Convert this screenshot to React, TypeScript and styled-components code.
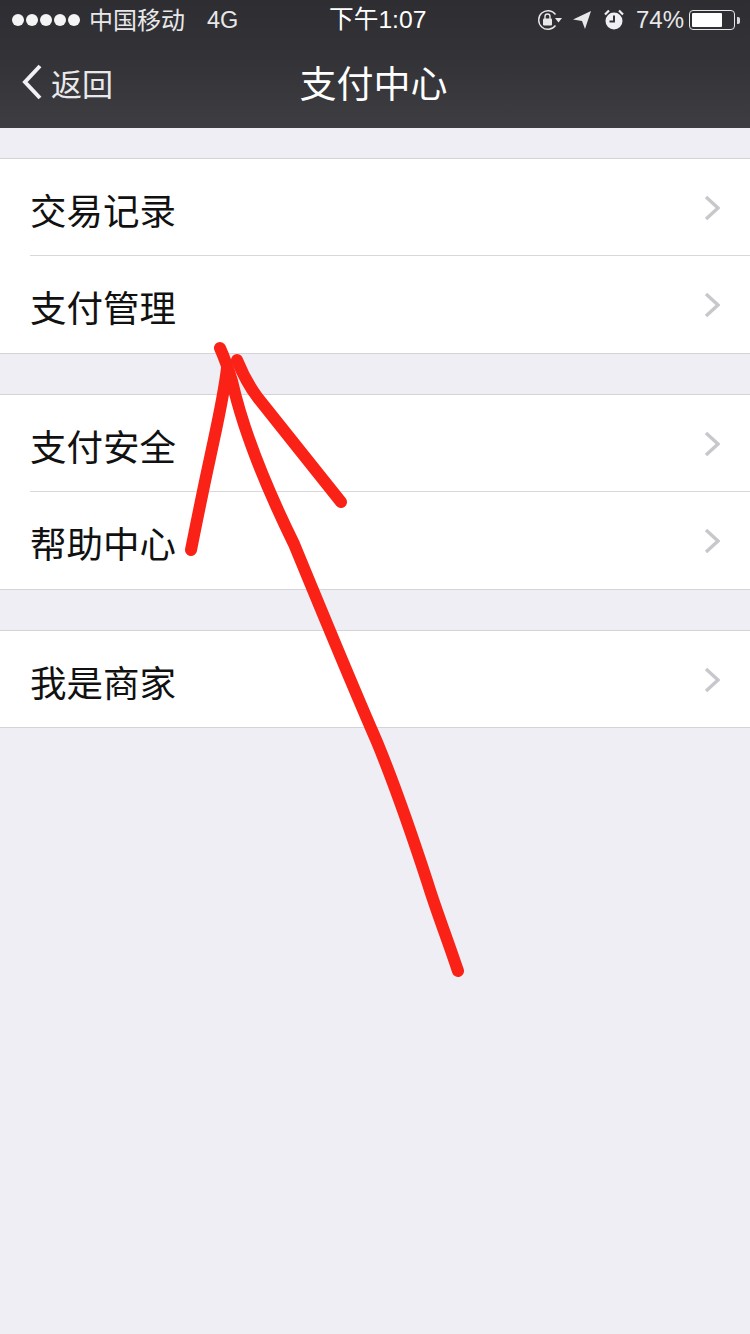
import React from 'react';
import styled, { createGlobalStyle } from 'styled-components';

const GlobalStyle = createGlobalStyle`
  html, body {
    margin: 0;
    padding: 0;
    background: #eeeef4;
    font-family: "Liberation Sans", "Noto Sans CJK SC", sans-serif;
  }
`;

const Page = styled.div`
  position: relative;
  width: 750px;
  height: 1334px;
  overflow: hidden;
  background: #eeeef4;
`;

const Header = styled.header`
  height: 128px;
  background: linear-gradient(180deg, #2d2d32 0%, #333338 50%, #3d3d42 100%);
  color: #fff;
`;

const StatusBar = styled.div`
  position: relative;
  display: flex;
  align-items: center;
  justify-content: space-between;
  height: 40px;
  padding: 0 0 0 12px;
  font-size: 24px;
`;

const StatusLeft = styled.div`
  display: flex;
  align-items: center;
  color: #e8e8ea;
`;

const Carrier = styled.span`
  position: relative;
  top: -2px;
`;

const Dots = styled.div`
  display: flex;
  gap: 2px;
  margin-right: 9px;
`;

const Dot = styled.span`
  width: 12px;
  height: 12px;
  border-radius: 50%;
  background: #f4f4f4;
`;

const Network = styled.span`
  margin-left: 22px;
  font-size: 23.5px;
`;

const Time = styled.div`
  position: absolute;
  left: 329px;
  top: 3px;
  font-size: 24.7px;
  line-height: 34px;
  white-space: nowrap;
`;

const StatusRight = styled.div`
  display: flex;
  align-items: center;
  height: 40px;
  padding-right: 10px;
  color: #e8e8ea;
`;

const LocationIcon = styled.svg`
  margin-left: 11px;
`;

const AlarmIcon = styled.svg`
  margin-left: 12px;
`;

const Percent = styled.span`
  margin: 0 5px 0 12px;
  font-size: 24px;
`;

const Battery = styled.div`
  display: flex;
  align-items: center;
  gap: 2px;
`;

const BatteryBody = styled.div`
  box-sizing: border-box;
  width: 46px;
  height: 20px;
  padding: 2px;
  border: 1.5px solid #e8e8ea;
  border-radius: 4px;
`;

const BatteryFill = styled.div`
  height: 100%;
  background: #fff;
  border-radius: 1px;
`;

const BatteryTip = styled.div`
  width: 3px;
  height: 7px;
  background: #d8d8da;
  border-radius: 0 2px 2px 0;
`;

const NavBar = styled.nav`
  position: relative;
  display: flex;
  align-items: center;
  justify-content: center;
  height: 88px;
`;

const BackButton = styled.div`
  position: absolute;
  left: 22px;
  top: 0;
  bottom: 4px;
  display: flex;
  align-items: center;
  gap: 9px;
  font-size: 31px;
  color: #e9e9eb;
`;

const Title = styled.h1`
  margin: 0 0 5px -3px;
  font-size: 37px;
  font-weight: 400;
  color: #fff;
`;

const Content = styled.main`
  display: flex;
  flex-direction: column;
  padding-top: 30px;
  gap: 40px;
`;

const Group = styled.section`
  background: #fff;
  border-top: 1px solid #d4d4d8;
  border-bottom: 1px solid #d4d4d8;
`;

const Row = styled.div<{ $last: boolean; $height: number }>`
  display: flex;
  align-items: center;
  justify-content: space-between;
  height: ${p => p.$height}px;
  margin-left: 30px;
  padding-right: 30px;
  border-bottom: ${p => (p.$last ? 'none' : '1px solid #d8d8dc')};
`;

const Label = styled.span`
  padding-top: 4px;
  font-size: 36.5px;
  color: #111;
`;

const ChevronIcon = styled.svg`
  margin-top: 1px;
`;

const Overlay = styled.svg`
  position: absolute;
  left: 0;
  top: 0;
  pointer-events: none;
`;

const groups = [['交易记录', '支付管理'], ['支付安全', '帮助中心'], ['我是商家']];

const Chevron = () => (
  <ChevronIcon width="16" height="26" viewBox="0 0 16 26" fill="none">
    <path d="M2 2l12 11L2 24" stroke="#c7c7cc" strokeWidth="3.4" />
  </ChevronIcon>
);

export default function App() {
  return (
    <Page>
      <GlobalStyle />
      <Header>
        <StatusBar>
          <StatusLeft>
            <Dots>
              {[0, 1, 2, 3, 4].map(i => <Dot key={i} />)}
            </Dots>
            <Carrier>中国移动</Carrier>
            <Network>4G</Network>
          </StatusLeft>
          <Time>下午1:07</Time>
          <StatusRight>
            <svg width="24" height="22" viewBox="0 0 24 22" fill="none">
              <path d="M17.5 5.5A9.3 9.3 0 1 0 17.5 16.5" stroke="#e8e8ea" strokeWidth="1.4" />
              <path d="M17 9h7l-3.5 4.5z" fill="#e8e8ea" />
              <rect x="5" y="9.5" width="9" height="7" rx="1" fill="#e8e8ea" />
              <path d="M7 10V7.5a2.5 2.5 0 0 1 5 0V10" stroke="#e8e8ea" strokeWidth="1.4" />
            </svg>
            <LocationIcon width="19" height="20" viewBox="0 0 19 20">
              <path d="M18 1 12 19 9 11 0 9.5z" fill="#e8e8ea" />
            </LocationIcon>
            <AlarmIcon width="20" height="22" viewBox="0 0 20 22">
              <circle cx="10" cy="12" r="8.5" fill="#f0f0f2" />
              <path d="M10 6.5V12.5H5.5" stroke="#333338" strokeWidth="2" fill="none" />
              <path d="M1 5.5 5 1.5M19 5.5 15 1.5" stroke="#f0f0f2" strokeWidth="2.2" />
            </AlarmIcon>
            <Percent>74%</Percent>
            <Battery>
              <BatteryBody>
                <BatteryFill style={{ width: '74%' }} />
              </BatteryBody>
              <BatteryTip />
            </Battery>
          </StatusRight>
        </StatusBar>
        <NavBar>
          <BackButton>
            <svg width="20" height="36" viewBox="0 0 20 36" fill="none">
              <path d="M18 2 3 18l15 16" stroke="#f2f2f4" strokeWidth="4" />
            </svg>
            返回
          </BackButton>
          <Title>支付中心</Title>
        </NavBar>
      </Header>
      <Content>
        {groups.map(rows => (
          <Group key={rows[0]}>
            {rows.map((label, i) => {
              const last = i === rows.length - 1;
              return (
                <Row key={label} $last={last} $height={last && rows.length > 1 ? 97 : 96}>
                  <Label>{label}</Label>
                  <Chevron />
                </Row>
              );
            })}
          </Group>
        ))}
      </Content>
      <Overlay width="750" height="1334" viewBox="0 0 750 1334" fill="none">
        <g stroke="#fa2216" strokeWidth="12" strokeLinecap="round" strokeLinejoin="round">
          <path d="M458 971C447 938 436 910 428 884 413 838 396 788 377 742 352 685 322 612 294 544 268 491 243 430 232 381 228 368 224 357 220 348" />
          <path d="M227 368C224 395 217 425 210 458 203 490 197 520 191 550" />
          <path d="M237 360C243 375 249 386 258 398 285 432 314 468 341 502" />
        </g>
      </Overlay>
    </Page>
  );
}
